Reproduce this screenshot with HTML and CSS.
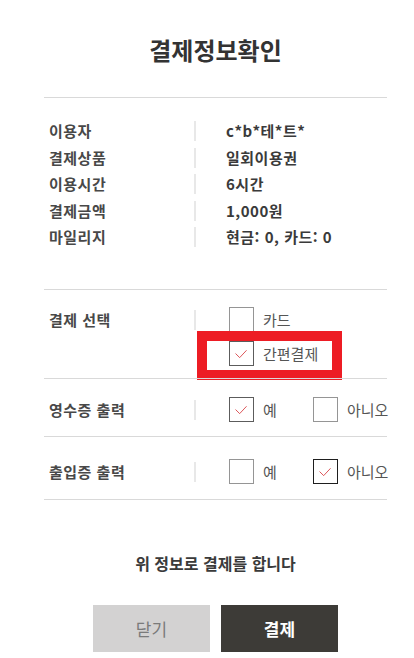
FILE: index.html
```html
<!DOCTYPE html>
<html lang="ko">
<head>
<meta charset="utf-8">
<title>결제정보확인</title>
<link rel="stylesheet" href="styles.css">
</head>
<body>
<div class="wrap">
  <h1 class="title">결제정보확인</h1>

  <div class="info">
    <div class="info-row"><span class="info-label">이용자</span><span class="info-value">c*b*테*트*</span></div>
    <div class="info-row"><span class="info-label">결제상품</span><span class="info-value">일회이용권</span></div>
    <div class="info-row"><span class="info-label">이용시간</span><span class="info-value">6시간</span></div>
    <div class="info-row"><span class="info-label">결제금액</span><span class="info-value">1,000원</span></div>
    <div class="info-row"><span class="info-label">마일리지</span><span class="info-value">현금: 0, 카드: 0</span></div>
  </div>

  <div class="opt-row opt-row--pay">
    <span class="opt-label">결제 선택</span>
    <div class="opt-list opt-list--stack">
      <label class="opt"><span class="cb"></span><span class="opt-text">카드</span></label>
      <label class="opt"><span class="cb cb--checked cb--mid"><svg viewBox="0 0 25 25" width="23" height="23"><polyline points="6,12.5 10.5,17 18,9" /></svg></span><span class="opt-text">간편결제</span></label>
    </div>
    <div class="highlight"></div>
  </div>

  <div class="opt-row opt-row--receipt">
    <span class="opt-label">영수증 출력</span>
    <div class="opt-list">
      <label class="opt opt--first"><span class="cb cb--checked cb--mid"><svg viewBox="0 0 25 25" width="23" height="23"><polyline points="6,12.5 10.5,17 18,9" /></svg></span><span class="opt-text">예</span></label>
      <label class="opt"><span class="cb"></span><span class="opt-text">아니오</span></label>
    </div>
  </div>

  <div class="opt-row opt-row--pass">
    <span class="opt-label">출입증 출력</span>
    <div class="opt-list">
      <label class="opt opt--first"><span class="cb"></span><span class="opt-text">예</span></label>
      <label class="opt"><span class="cb cb--checked cb--dark"><svg viewBox="0 0 25 25" width="23" height="23"><polyline points="6,12.5 10.5,17 18,9" /></svg></span><span class="opt-text">아니오</span></label>
    </div>
  </div>

  <p class="message">위 정보로 결제를 합니다</p>

  <div class="buttons">
    <button class="btn btn--close">닫기</button>
    <button class="btn btn--pay">결제</button>
  </div>
</div>
</body>
</html>
```

FILE: styles.css
```css
* {
  box-sizing: border-box;
}

html, body {
  margin: 0;
  padding: 0;
  background: #fff;
}

body {
  font-family: "Noto Sans CJK KR", "Noto Sans", sans-serif;
  color: #333;
}

.wrap {
  margin-left: 44px;
  width: 343px;
}

.title {
  margin: 0;
  padding-top: 35px;
  height: 65px;
  line-height: 30px;
  font-size: 24px;
  font-weight: 700;
  text-align: center;
  color: #333;
}

.info {
  margin-top: 32px;
  border-top: 1px solid #d9d9d9;
  padding: 23px 0 42px;
  display: flex;
  flex-direction: column;
  gap: 6.5px;
}

.info-row {
  display: flex;
  height: 20px;
  line-height: 20px;
  font-size: 15px;
}

.info-label {
  width: 150px;
  padding-left: 5px;
  color: #484848;
  font-weight: 700;
  letter-spacing: 0.5px;
}

.info-value {
  border-left: 2px solid #e8e8e8;
  padding-left: 30px;
  color: #3a3a3a;
  font-weight: 700;
  letter-spacing: 0.5px;
}

.opt-row {
  position: relative;
  display: flex;
  align-items: flex-start;
  border-top: 1px solid #d9d9d9;
}

.opt-row--pay {
  padding: 17px 0 12px;
}

.opt-row--receipt {
  padding: 18px 0 14px;
}

.opt-row--pass {
  padding: 22px 0 15px;
  border-bottom: 1px solid #d9d9d9;
}

.opt-label {
  flex-shrink: 0;
  width: 152px;
  height: 20px;
  margin-top: 2.5px;
  line-height: 20px;
  padding-left: 5px;
  border-right: 2px solid #e8e8e8;
  font-size: 15px;
  font-weight: 700;
  color: #484848;
  letter-spacing: 0.5px;
}

.opt-list {
  display: flex;
  padding-left: 33px;
  white-space: nowrap;
}

.opt-list--stack {
  flex-direction: column;
  gap: 9px;
}

.opt {
  display: flex;
  align-items: center;
  gap: 9px;
  height: 25px;
  flex-shrink: 0;
}

.opt--first {
  width: 84px;
}

.cb {
  flex-shrink: 0;
  width: 25px;
  height: 25px;
  border: 1px solid #959595;
  background: #fff;
  display: flex;
  align-items: center;
  justify-content: center;
}

.cb--mid {
  border-color: #5c5c5c;
}

.cb--dark {
  border-color: #1e1e1e;
}

.cb svg polyline {
  fill: none;
  stroke: #d9464a;
  stroke-width: 1;
}

.opt-text {
  font-size: 15px;
  color: #555;
  line-height: 20px;
  white-space: nowrap;
}

.highlight {
  position: absolute;
  top: 41px;
  left: 153px;
  width: 145px;
  height: 49px;
  border: 10px solid #ed1c24;
}

.message {
  margin: 51px 0 0;
  line-height: 24px;
  font-size: 16px;
  font-weight: 700;
  text-align: center;
  color: #3a3a3a;
}

.buttons {
  margin-top: 30px;
  display: flex;
  justify-content: center;
  gap: 11px;
}

.btn {
  width: 117px;
  height: 47px;
  border: 0;
  font-family: "Noto Sans CJK KR", "Noto Sans", sans-serif;
  font-size: 17px;
  padding: 0;
}

.btn--close {
  background: #d3d2d2;
  color: #7a7a7a;
}

.btn--pay {
  background: #3d3b37;
  color: #fff;
  font-weight: 700;
}
```
